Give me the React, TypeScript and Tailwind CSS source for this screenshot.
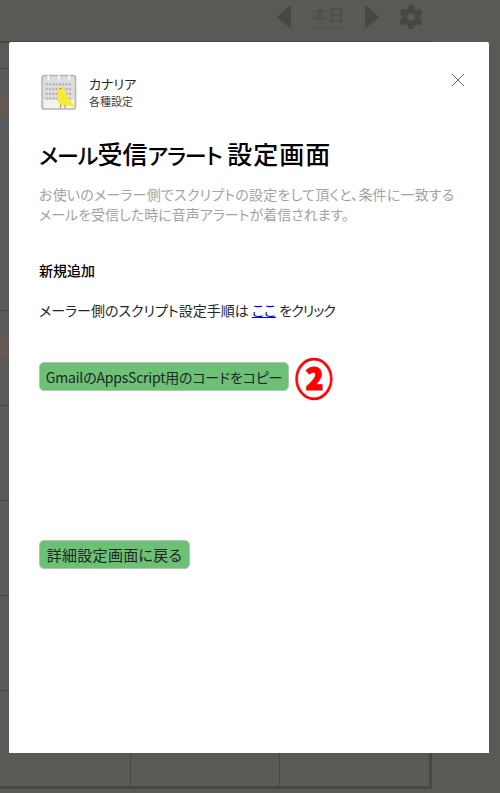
import React from 'react';
import { FaGear } from 'react-icons/fa6';

const font = 'font-["Noto_Sans_CJK_JP","Noto_Sans",sans-serif]';

function CanaryIcon() {
  return (
    <svg width="36" height="36" viewBox="0 0 38 38" className="block">
      <rect x="1" y="1.5" width="35.500" height="35.500" rx="2.5" fill="#dcdcdc" stroke="#b4b4b4" strokeWidth="1.5" />
      <rect x="3" y="27" width="32" height="9" fill="#f4f2ea" />
      {[7, 18, 29].map((x) => (
        <rect key={x} x={x} y="1" width="1.5" height="6" fill="#ffffff" />
      ))}
      {[11, 16, 21, 26].map((y) => (
        <line key={y} x1="5" x2="32" y1={y} y2={y} stroke="#a8a8a8" strokeWidth="2" strokeDasharray="2 1.5" />
      ))}
      <path
        d="M17.500 15.500c1-2.500 6-2.500 7 .5 1 3 3 5 5 9 1.500 3 4 6 7.500 11l-7-3c-3 1-8 1-10-1-3-3-3-8-2-11 .5-2 0-4-.5-5.500z"
        fill="#f8e936"
      />
      <path d="M21 32l-.5 4M25 33l.5 3" stroke="#8a8468" strokeWidth="1" />
      <circle cx="20.500" cy="15.500" r=".8" fill="#6b6420" />
    </svg>
  );
}

function CalendarRow({ className }: { className: string }) {
  return (
    <div className={`flex ${className}`}>
      <div className="w-[130px]" />
      <div className="w-[150px] border-l border-[#474744]" />
      <div className="w-[150px] border-l border-[#474744]" />
    </div>
  );
}

export default function App() {
  return (
    <div className={`relative h-[793px] w-[500px] overflow-hidden bg-[#5a5955] [font-feature-settings:"palt"] ${font}`}>
      {/* 暗転した背景のカレンダー */}
      <div className="flex h-[41px] items-center pb-[7px] pl-[277px]">
        <div className="h-0 w-0 border-y-[12px] border-r-[14px] border-y-transparent border-r-[#474745]" />
        <div className="ml-[21px] flex flex-col items-center">
          <span className="text-[16px] leading-[18px] text-[#44523f]">本日</span>
          <span className="mt-[4px] h-[3px] w-[32px] bg-[#4a5c48]" />
        </div>
        <div className="ml-[21px] h-0 w-0 border-y-[12px] border-l-[14px] border-y-transparent border-l-[#474745]" />
        <FaGear className="ml-[20px] text-[24px] text-[#474745]" />
      </div>
      <div className="h-[748px] w-[432px] border-t-[2px] border-r-[3px] border-b-[3px] border-[#474744]">
        <CalendarRow className="h-[25px]" />
        <div className="h-[242px] border-t border-[#474744] pt-[27px]">
          <div className="h-[19px] w-[9px] bg-[#665853]" />
          <div className="h-[20px] w-[9px] bg-[#565b60]" />
        </div>
        <div className="h-[95px] border-t border-[#474744] pt-[27px]">
          <div className="h-[19px] w-[9px] bg-[#665853]" />
        </div>
        <CalendarRow className="h-[95px] border-t border-[#474744]" />
        <CalendarRow className="h-[95px] border-t border-[#474744]" />
        <CalendarRow className="h-[95px] border-t border-[#474744]" />
        <CalendarRow className="h-[96px] border-t border-[#474744]" />
      </div>

      {/* モーダル */}
      <div className="absolute top-[42px] left-[9px] h-[711px] w-[480px] rounded-t-[2px] bg-white px-[30px] pt-[32px] text-[#212529]">
        <button className="absolute top-[31px] right-[24px] block">
          <svg width="14" height="14" viewBox="0 0 14 14" className="block">
            <path d="M1 1l12 12M13 1L1 13" stroke="#666666" strokeWidth="1" fill="none" />
          </svg>
        </button>
        <div className="flex items-center gap-[12px] pl-[2px]">
          <CanaryIcon />
          <div>
            <div className="text-[13px] leading-[19px]">カナリア</div>
            <div className="text-[11px] leading-[17px] text-[#444444]">各種設定</div>
          </div>
        </div>
        <h1 className="mt-[26px] text-[25px] leading-[34px] font-medium whitespace-nowrap text-black">
          <span className="text-[22px] tracking-[-1px]">メール</span>
          受信
          <span className="text-[22px] tracking-[-1px]">アラート</span>{' '}
          <span className="tracking-[1px]">設定画面</span>
        </h1>
        <p className="mt-[13px] text-[14px] leading-[20px] whitespace-nowrap text-[#a3a3a3]">
          <span className="tracking-[0.2px]">お使いのメーラー側でスクリプトの設定をして頂くと、条件に一致する</span>
          <br />
          メールを受信した時に音声アラートが着信されます。
        </p>
        <h2 className="mt-[36px] text-[14px] leading-[20px] font-medium text-black">新規追加</h2>
        <p className="mt-[20px] text-[14px] leading-[20px]">
          メーラー側のスクリプト設定手順は{' '}
          <a href="#" className="text-[#0000ee] underline">
            ここ
          </a>{' '}
          <span className="tracking-[-1px]">をクリック</span>
        </p>
        <div className="mt-[42px] flex h-[29px] items-center">
          <button className="h-[29px] w-[250px] rounded-[5px] border border-[#bdbdbd] bg-[#6cc174] text-[14px] leading-[20px] tracking-[-0.2px] whitespace-nowrap text-[#212529]">
            GmailのAppsScript用のコードをコピー
          </button>
          <span className="ml-[6px] scale-y-110 text-[38px] leading-[40px] font-black text-[#ff0000] [-webkit-text-stroke:1px_#ff0000]">②</span>
        </div>
        <button className="mt-[149px] block h-[29px] w-[151px] rounded-[5px] border border-[#bdbdbd] bg-[#6cc174] text-[15px] leading-[20px] tracking-[0.3px] whitespace-nowrap text-[#212529]">
          詳細設定画面に戻る
        </button>
      </div>
    </div>
  );
}
